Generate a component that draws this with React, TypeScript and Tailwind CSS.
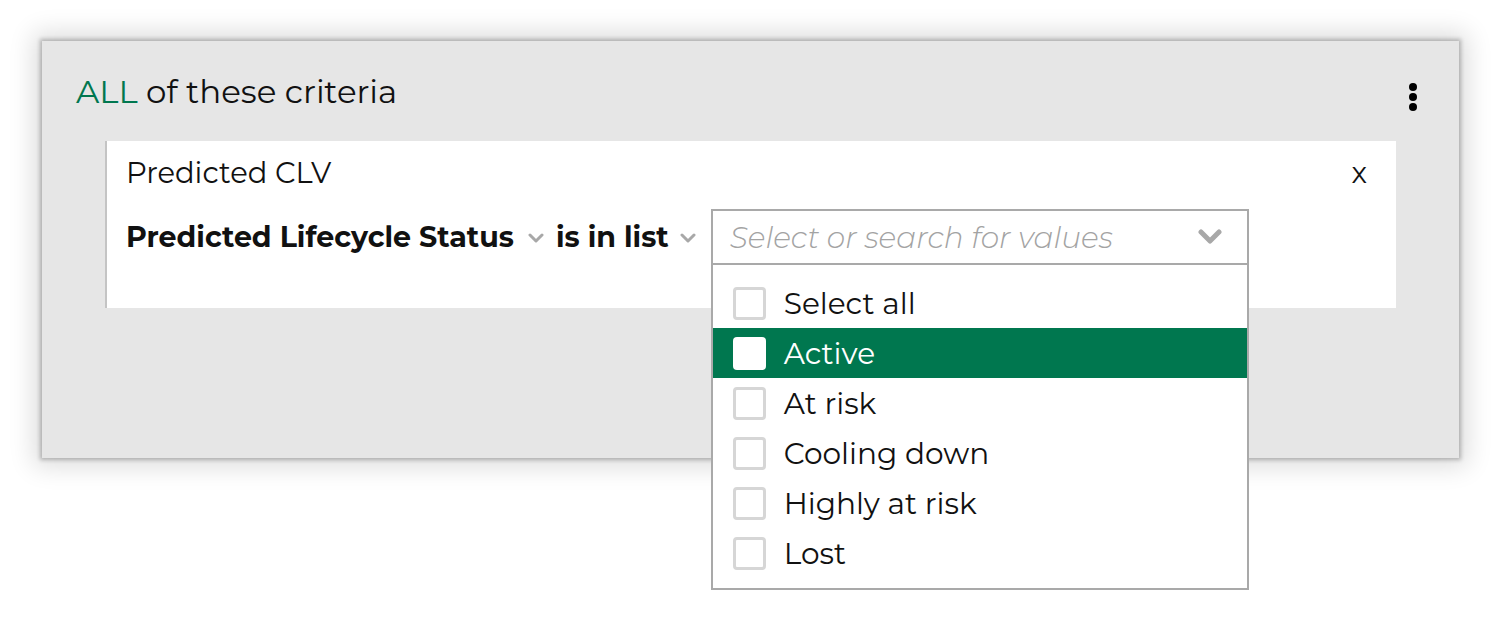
const options = ["Select all", "Active", "At risk", "Cooling down", "Highly at risk", "Lost"]

function SmallChevron({ className }: { className: string }) {
  return (
    <svg width="16" height="10" viewBox="0 0 16 10" className={className}>
      <polyline points="2,2 8,8 14,2" fill="none" stroke="#a8a8a8" strokeWidth="3" strokeLinecap="round" strokeLinejoin="round" />
    </svg>
  )
}

export default function App() {
  const active = "Active"

  return (
    <div
      className="w-[1501px] h-[626px] bg-white overflow-hidden pt-[41px] pl-[42px]"
      style={{ fontFamily: "Montserrat, Inter, 'Noto Sans', sans-serif" }}
    >
      <div className="w-[1417px] h-[417px] bg-[#e6e6e6] shadow-[0_0_4px_2px_rgba(0,0,0,0.24),0_0_24px_8px_rgba(0,0,0,0.14)]">
        {/* header */}
        <div className="flex items-center justify-between h-[100px] pl-[34px] pr-[42px] pt-[2px]">
          <div className="text-[32.5px] text-[#111]">
            <span className="text-[#00774f]">ALL</span> of these criteria
          </div>
          <div className="flex flex-col gap-[2px] mt-[10px]">
            <span className="w-[8px] h-[8px] rounded-full bg-black" />
            <span className="w-[8px] h-[8px] rounded-full bg-black" />
            <span className="w-[8px] h-[8px] rounded-full bg-black" />
          </div>
        </div>

        {/* criteria card */}
        <div className="ml-[63px] w-[1291px] h-[167px] bg-white border-l-2 border-[#c4c4c4]">
          <div className="flex items-center justify-between h-[64px] pl-[19px] pr-[29px] text-[29px] text-[#111]">
            <span>Predicted CLV</span>
            <span>x</span>
          </div>
          <div className="flex items-center mt-[4px] pl-[19px] text-[28.5px] font-bold text-[#111]">
            <span>Predicted Lifecycle Status</span>
            <SmallChevron className="ml-[14px] mr-[12px] mt-[2px]" />
            <span>is in list</span>
            <SmallChevron className="ml-[11px] mr-[15px] mt-[2px]" />
            <div className="relative">
              <div className="w-[538px] h-[56px] border-2 border-[#a9a9a9] bg-white flex items-center justify-between pl-[17px] pr-[25px]">
                <span className="italic font-light text-[29.6px] text-[#a3a3a3]">Select or search for values</span>
                <svg width="24" height="16" viewBox="0 0 24 16">
                  <polyline points="3,3 12,12 21,3" fill="none" stroke="#a8a8a8" strokeWidth="5" strokeLinecap="round" strokeLinejoin="round" />
                </svg>
              </div>
              <div className="absolute left-0 top-[54px] w-[538px] h-[327px] bg-white border-2 border-[#a9a9a9] pt-[13px] pb-[10px] font-normal text-[29.6px]">
                {options.map((o) => {
                  const on = o === active
                  return (
                    <div
                      key={o}
                      className={`flex items-center h-[50px] pl-[20px] gap-[18px] ${on ? "bg-[#00774f] text-white" : "text-[#111]"}`}
                    >
                      <span
                        className={`w-[33px] h-[33px] rounded-[4px] bg-white ${on ? "" : "border-[3px] border-[#d6d6d6]"}`}
                      />
                      <span>{o}</span>
                    </div>
                  )
                })}
              </div>
            </div>
          </div>
        </div>
      </div>
    </div>
  )
}
